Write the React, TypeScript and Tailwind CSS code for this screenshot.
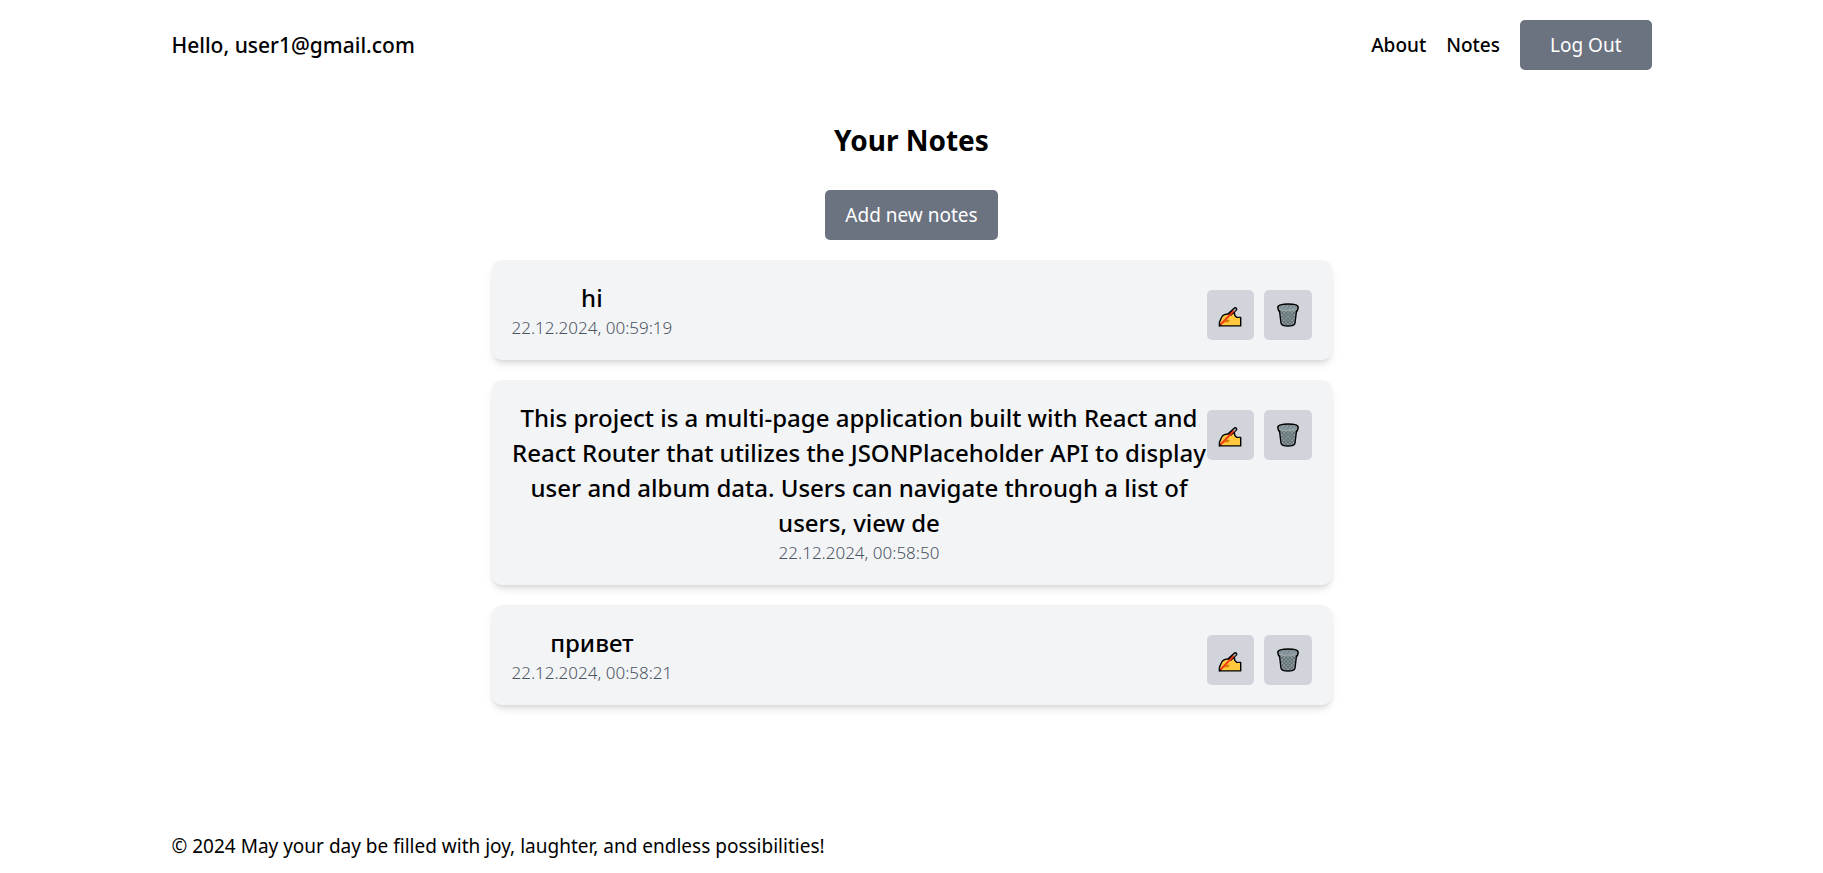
type Note = { id: number; title: string; date: string };

const notes: Note[] = [
  { id: 1, title: "hi", date: "22.12.2024, 00:59:19" },
  {
    id: 2,
    title:
      "This project is a multi-page application built with React and React Router that utilizes the JSONPlaceholder API to display user and album data. Users can navigate through a list of users, view de",
    date: "22.12.2024, 00:58:50",
  },
  { id: 3, title: "привет", date: "22.12.2024, 00:58:21" },
];

function WritingHandIcon() {
  return (
    <svg width="24" height="20" viewBox="0 0 24 20" aria-hidden="true">
      <path
        d="M1.4 18.9 L1.4 15.6 L2.8 12 L4.4 9 C5.6 7.8 7.6 7.2 9.4 7 L13 6 L16.4 5.6 L16.8 8.4 L18.6 10.2 L22.7 10.4 L22.7 18.9 Z"
        fill="#ffc83d"
        stroke="#000"
        strokeWidth="1.4"
        strokeLinejoin="round"
      />
      <path d="M8.6 12.4 L11.8 13 L10.4 15.2 L6 15.4 Z" fill="#d67d00" />
      <path d="M12.4 6.6 L17.2 2.2" stroke="#000" strokeWidth="4.2" strokeLinecap="round" />
      <path d="M2.2 18 L16.2 3.4" stroke="#f03a17" strokeWidth="1.9" />
      <path d="M16.2 3.4 L17.2 2.4" stroke="#9aa5ae" strokeWidth="1.9" strokeLinecap="round" />
      <path d="M0.8 19.4 L1.4 16.6 L3.8 18.8 Z" fill="#000" />
    </svg>
  );
}

function TrashIcon() {
  return (
    <svg width="22" height="24" viewBox="0 0 22 24" aria-hidden="true">
      <path
        d="M2.4 7 L4 20.2 C4.6 22 8 23 11 23 C14 23 17.4 22 18 20.2 L19.6 7 Z"
        fill="#8c9a9f"
        stroke="#000"
        strokeWidth="1.4"
        strokeLinejoin="round"
      />
      <path
        d="M4.4 9 L16 20.6 M7.4 8 L17 17.4 M11 8 L17.6 14.4 M15 8 L18 11 M4.8 13 L13.6 21.8 M5.2 17.4 L9.6 21.8 M17.6 9 L6 20.6 M14.6 8 L5 17.4 M11 8 L4.4 14.4 M7 8 L4 11 M17.2 13 L8.4 21.8 M16.8 17.4 L12.4 21.8"
        stroke="#48545a"
        strokeWidth="0.7"
      />
      <path
        d="M0.8 4.2 C0.8 2.2 5 1 11 1 C17 1 21.2 2.2 21.2 4.2 L20.6 7 C19 8 16 8.4 11 8.4 C6 8.4 3 8 1.4 7 Z"
        fill="#93a1a7"
      />
      <path
        d="M2.8 9 L1.4 7 L0.8 4.2 C0.8 2.2 5 1 11 1 C17 1 21.2 2.2 21.2 4.2 L20.6 7 L19.2 9"
        fill="none"
        stroke="#000"
        strokeWidth="1.5"
        strokeLinejoin="round"
      />
      <ellipse cx="11" cy="4.2" rx="8.8" ry="2.2" fill="#7b8a90" />
      <path d="M4 5.4 L7 3.2 M7.5 6 L11 2.8 M11.5 6 L15 3.2 M15 6 L18 4" stroke="#aab7bc" strokeWidth="0.8" />
    </svg>
  );
}

function NoteCard({ note }: { note: Note }) {
  return (
    <li className="flex items-start justify-between rounded-[10px] bg-[#f3f4f6] p-5 shadow-[0_5px_8px_-1px_rgba(0,0,0,0.1),0_3px_5px_-2px_rgba(0,0,0,0.1)]">
      <div className="text-center">
        <h3 className="text-[24px] leading-[35px] font-medium">{note.title}</h3>
        <p className="text-[17px] leading-[25px] font-light text-[#4b5563]">{note.date}</p>
      </div>
      <div className="mt-2.5 flex shrink-0 gap-2.5">
        <button
          type="button"
          aria-label="Edit note"
          className="flex h-[50px] w-[47px] items-center justify-center rounded-[5px] bg-[#d1d5db] pt-1"
        >
          <WritingHandIcon />
        </button>
        <button
          type="button"
          aria-label="Delete note"
          className="flex h-[50px] w-12 items-center justify-center rounded-[5px] bg-[#d1d5db]"
        >
          <TrashIcon />
        </button>
      </div>
    </li>
  );
}

export default function App() {
  return (
    <div className="mx-auto flex min-h-screen max-w-[1480px] flex-col bg-white font-['Noto_Sans','Open_Sans',sans-serif] text-[19px] leading-[30px] text-black">
      <header className="flex items-center justify-between py-5">
        <p className="text-[21px] font-medium">Hello, user1@gmail.com</p>
        <nav className="flex items-center gap-5 font-medium">
          <a href="#about">About</a>
          <a href="#notes">Notes</a>
          <button type="button" className="h-[50px] rounded-[5px] bg-[#6b7280] px-[30px] font-normal text-white">
            Log Out
          </button>
        </nav>
      </header>

      <main className="flex flex-1 flex-col items-center pt-[30px]">
        <h1 className="text-[28px] leading-10 font-bold">Your Notes</h1>
        <button type="button" className="mt-[30px] h-[50px] rounded-[5px] bg-[#6b7280] px-5 text-white">
          Add new notes
        </button>
        <ul className="mt-5 flex w-full max-w-[840px] flex-col gap-5">
          {notes.map((note) => (
            <NoteCard key={note.id} note={note} />
          ))}
        </ul>
      </main>

      <footer className="py-3">
        <p>© 2024 May your day be filled with joy, laughter, and endless possibilities!</p>
      </footer>
    </div>
  );
}
